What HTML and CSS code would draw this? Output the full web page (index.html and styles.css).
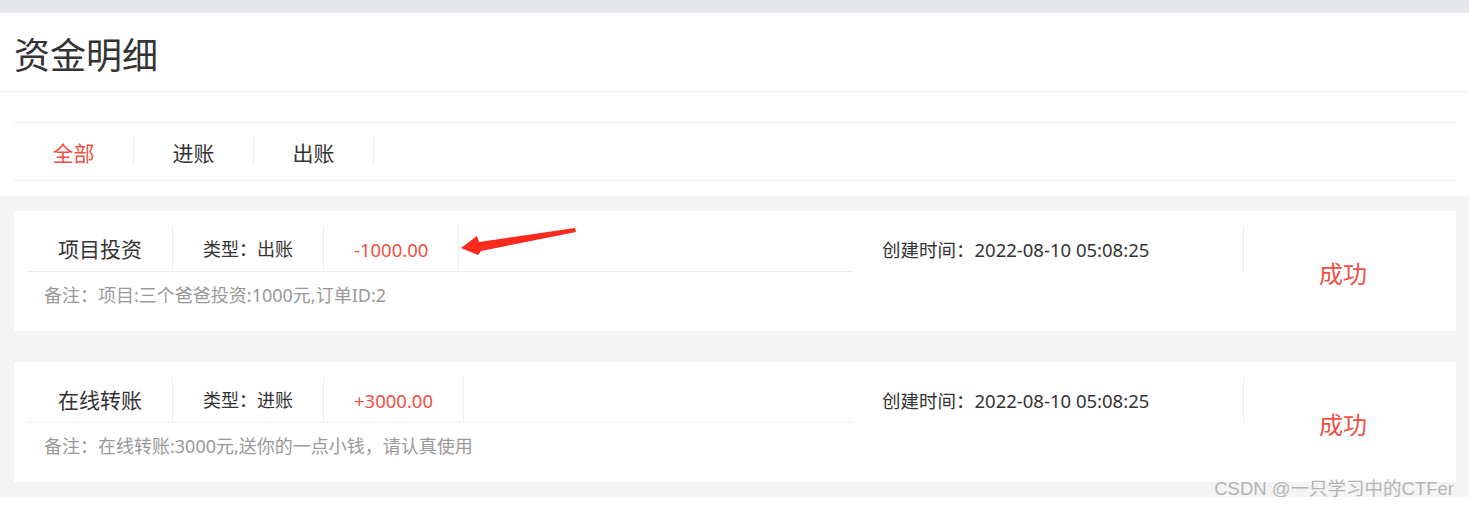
FILE: index.html
```html
<!DOCTYPE html>
<html lang="zh-CN">
<head>
    <meta charset="UTF-8">
    <meta name="viewport" content="width=device-width, initial-scale=1.0">
    <title>资金明细</title>
    <link rel="stylesheet" href="styles.css">
</head>
<body>
    <div class="topbar"></div>

    <div class="header">
        <h1>资金明细</h1>
    </div>

    <div class="tabs">
        <div class="tab active">全部</div>
        <div class="tab">进账</div>
        <div class="tab">出账</div>
    </div>

    <div class="list">
        <div class="card">
            <div class="main">
                <div class="top">
                    <div class="cell name">项目投资</div>
                    <div class="cell">类型：出账</div>
                    <div class="cell money">-1000.00</div>
                </div>
                <div class="note">备注：项目:三个爸爸投资:1000元,订单ID:2</div>
            </div>
            <div class="time">创建时间：2022-08-10 05:08:25</div>
            <div class="status">成功</div>
        </div>

        <div class="card">
            <div class="main">
                <div class="top">
                    <div class="cell name">在线转账</div>
                    <div class="cell">类型：进账</div>
                    <div class="cell money">+3000.00</div>
                </div>
                <div class="note">备注：在线转账:3000元,送你的一点小钱，请认真使用</div>
            </div>
            <div class="time">创建时间：2022-08-10 05:08:25</div>
            <div class="status">成功</div>
        </div>
    </div>

    <!-- red arrow drawn over the screenshot -->
    <svg class="arrow" width="130" height="40" viewBox="0 0 130 40">
        <polygon points="6,26 22,14 24,20 120,6 121,10 26,29 23,33" fill="#fc2a1c"/>
    </svg>

    <div class="watermark">CSDN @一只学习中的CTFer</div>
</body>
</html>
```

FILE: styles.css
```css
body {
    font-family: 'Noto Sans', 'Noto Sans CJK SC', sans-serif;
    margin: 0;
    background: #fff;
    color: #333;
    position: relative;
}
.topbar {
    height: 13px;
    background: #e6e7eb;
}
.header {
    height: 78px;
    padding-left: 14px;
    display: flex;
    align-items: center;
    border-bottom: 1px solid #eee;
}
.header h1 {
    margin: 0;
    padding-top: 2px;
    font-size: 36px;
    font-weight: normal;
    color: #333;
}
.tabs {
    display: flex;
    margin: 30px 13px 0 14px;
    border-top: 1px solid #eee;
    border-bottom: 1px solid #eee;
    padding: 15px 0 16px;
}
.tab {
    width: 119px;
    height: 26px;
    line-height: 31px;
    text-align: center;
    font-size: 21px;
    border-right: 1px solid #eee;
}
.tab.active {
    color: #f04f45;
}
.list {
    margin-top: 15px;
    background: #f4f4f4;
    padding: 15px 13px 15px 14px;
    display: flex;
    flex-direction: column;
    gap: 31px;
}
.card {
    background: #fff;
    height: 90px;
    padding: 15px 14px;
    display: flex;
}
.main {
    width: 824px;
}
.top {
    display: flex;
    height: 45px;
    border-bottom: 1px solid #eee;
}
.cell {
    padding: 2px 30px 0;
    line-height: 43px;
    font-size: 18px;
    border-right: 1px solid #eee;
}
.cell.name {
    font-size: 21px;
}
.money {
    font-size: 18.5px;
    color: #f04f45;
}
.note {
    padding: 2px 0 0 16px;
    line-height: 42px;
    font-size: 18px;
    color: #999;
}
.time {
    width: 361px;
    height: 45px;
    padding: 1px 0 0 30px;
    line-height: 45px;
    font-size: 18.5px;
    border-right: 1px solid #eee;
}
.status {
    flex: 1;
    display: flex;
    align-items: center;
    justify-content: center;
    padding-top: 2px;
    font-size: 24px;
    color: #f04f45;
}
.arrow {
    position: absolute;
    left: 455px;
    top: 222px;
}
.watermark {
    position: absolute;
    right: 15px;
    top: 474px;
    font-family: 'Liberation Sans', 'Noto Sans CJK SC', sans-serif;
    font-size: 18.5px;
    color: #b4b4b4;
}
```
